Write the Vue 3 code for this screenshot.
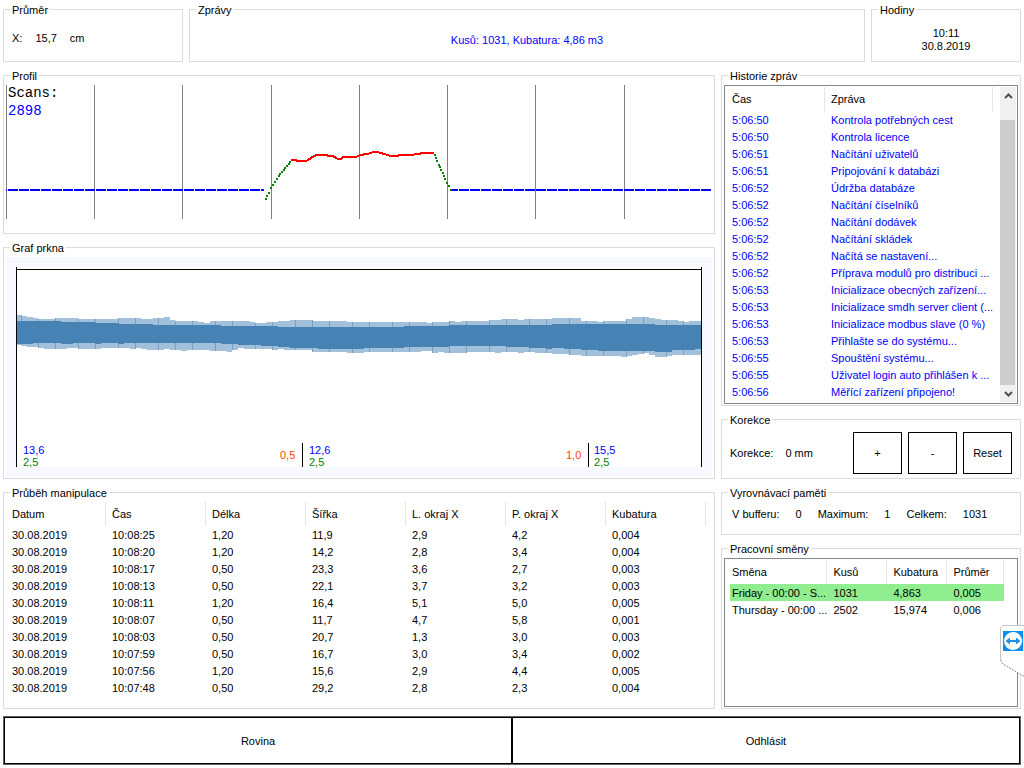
<script setup>
const gridLines = [6, 94, 182, 271, 359, 447, 535, 624]

const profilePoints =
  '291,160 296,160 297,161 306,161 308,160 311,158 314,156 317,155 327,155 328,156 333,156 336,158 338,159 341,159 343,157 356,157 360,155 367,154 374,152 378,152 380,153 385,154 390,156 397,156 400,155 413,155 415,154 419,154 422,153 433,153'

const edgePoints = [
  [266, 199], [267, 196], [269, 193], [271, 188], [273, 185], [275, 182], [277, 179], [279, 176],
  [280, 174], [282, 172], [284, 170], [285, 168], [287, 166], [289, 164], [290, 162],
  [433, 153], [435, 155], [436, 158], [437, 161], [439, 165], [440, 167], [441, 170], [443, 173],
  [444, 176], [445, 179], [447, 183], [449, 186], [451, 190],
]

// Each step is [end x, y]; every band begins at x = 17.
const outerTop = [
  [22, 315], [27, 316], [33, 317], [38, 318], [55, 319], [78, 318], [118, 319], [141, 318],
  [153, 319], [164, 318], [170, 317], [175, 320], [198, 321], [204, 322], [210, 323], [250, 321],
  [255, 322], [267, 323], [278, 322], [290, 321], [313, 320], [347, 321], [427, 322], [432, 323],
  [449, 322], [455, 321], [461, 322], [489, 321], [501, 320], [518, 319], [524, 320], [552, 319],
  [581, 318], [598, 321], [603, 322], [626, 321], [632, 319], [649, 317], [655, 318], [661, 319],
  [678, 320], [684, 321], [689, 322], [701, 321],
]
const outerBottom = [
  [22, 345], [27, 346], [38, 347], [44, 348], [67, 349], [73, 348], [78, 348], [101, 349],
  [130, 348], [136, 349], [141, 348], [147, 349], [164, 350], [170, 349], [181, 350], [187, 351],
  [210, 350], [227, 351], [232, 352], [238, 350], [244, 348], [272, 349], [278, 350], [284, 349],
  [312, 350], [347, 352], [364, 353], [421, 352], [432, 351], [438, 353], [444, 352], [467, 353],
  [495, 352], [501, 353], [518, 352], [524, 353], [535, 352], [552, 353], [569, 354], [581, 355],
  [621, 356], [627, 357], [632, 356], [638, 355], [644, 354], [649, 353], [655, 355], [667, 357],
  [672, 356], [701, 355],
]
const coreTop = [
  [61, 321], [95, 322], [119, 323], [153, 324], [221, 325], [278, 326], [404, 327], [449, 326],
  [552, 325], [655, 324], [701, 325],
]
const coreBottom = [
  [33, 344], [61, 343], [73, 344], [95, 343], [101, 344], [118, 343], [124, 344], [221, 343],
  [238, 344], [261, 345], [278, 346], [290, 347], [318, 348], [364, 349], [404, 348], [449, 347],
  [506, 346], [529, 347], [546, 348], [552, 349], [564, 348], [581, 349], [598, 350], [655, 351],
  [672, 352], [695, 350], [701, 349],
]

function stepPoints(steps) {
  let x = 17
  const points = []
  for (const [end, y] of steps) {
    points.push([x, y], [end, y])
    x = end
  }
  return points
}
function band(top, bottom) {
  return 'M' + [...stepPoints(top), ...stepPoints(bottom).reverse()].map((p) => p.join(' ')).join('L') + 'Z'
}
const outerPath = band(outerTop, outerBottom)
const corePath = band(coreTop, coreBottom)

const sections = [
  21, 38, 55, 78, 95, 118, 135, 158, 175, 192, 215, 232, 255, 272, 295, 312, 329, 352, 369, 392,
  409, 432, 449, 466, 489, 506, 529, 546, 569, 586, 603, 626, 643, 666, 683,
]

const boards = [
  { x: 23, width: '13,6', height: '2,5' },
  { x: 309, width: '12,6', height: '2,5' },
  { x: 594, width: '15,5', height: '2,5' },
]
const cuts = [
  { x: 302, textX: 280, label: '0,5' },
  { x: 588, textX: 566, label: '1,0' },
]

const runColumns = ['Datum', 'Čas', 'Délka', 'Šířka', 'L. okraj X', 'P. okraj X', 'Kubatura']
const runs = [
  ['30.08.2019', '10:08:25', '1,20', '11,9', '2,9', '4,2', '0,004'],
  ['30.08.2019', '10:08:20', '1,20', '14,2', '2,8', '3,4', '0,004'],
  ['30.08.2019', '10:08:17', '0,50', '23,3', '3,6', '2,7', '0,003'],
  ['30.08.2019', '10:08:13', '0,50', '22,1', '3,7', '3,2', '0,003'],
  ['30.08.2019', '10:08:11', '1,20', '16,4', '5,1', '5,0', '0,005'],
  ['30.08.2019', '10:08:07', '0,50', '11,7', '4,7', '5,8', '0,001'],
  ['30.08.2019', '10:08:03', '0,50', '20,7', '1,3', '3,0', '0,003'],
  ['30.08.2019', '10:07:59', '0,50', '16,7', '3,0', '3,4', '0,002'],
  ['30.08.2019', '10:07:56', '1,20', '15,6', '2,9', '4,4', '0,005'],
  ['30.08.2019', '10:07:48', '0,50', '29,2', '2,8', '2,3', '0,004'],
]

const messages = [
  ['5:06:50', 'Kontrola potřebných cest'],
  ['5:06:50', 'Kontrola licence'],
  ['5:06:51', 'Načítání uživatelů'],
  ['5:06:51', 'Pripojování k databázi'],
  ['5:06:52', 'Údržba databáze'],
  ['5:06:52', 'Načítání číselníků'],
  ['5:06:52', 'Načítání dodávek'],
  ['5:06:52', 'Načítání skládek'],
  ['5:06:52', 'Načítá se nastavení...'],
  ['5:06:52', 'Příprava modulů pro distribuci ...'],
  ['5:06:53', 'Inicializace obecných zařízení...'],
  ['5:06:53', 'Inicializace smdh server client (...'],
  ['5:06:53', 'Inicializace modbus slave (0 %)'],
  ['5:06:53', 'Přihlašte se do systému...'],
  ['5:06:55', 'Spouštění systému...'],
  ['5:06:55', 'Uživatel login auto přihlášen k ...'],
  ['5:06:56', 'Měřící zařízení připojeno!'],
]

const shifts = [
  ['Friday - 00:00 - S...', '1031', '4,863', '0,005'],
  ['Thursday - 00:00 ...', '2502', '15,974', '0,006'],
]
</script>

<template>
  <div class="page">
    <header class="top">
      <fieldset class="group">
        <legend>Průměr</legend>
        <div class="diameter"><span>X:</span><span>15,7</span><span>cm</span></div>
      </fieldset>
      <fieldset class="group">
        <legend>Zprávy</legend>
        <div class="centered message">Kusů: 1031, Kubatura: 4,86 m3</div>
      </fieldset>
      <fieldset class="group">
        <legend>Hodiny</legend>
        <div class="centered"><span>10:11</span><span>30.8.2019</span></div>
      </fieldset>
    </header>

    <main class="main">
      <div class="column">
        <fieldset class="group">
          <legend>Profil</legend>
          <svg class="chart" viewBox="4 82 710 151" shape-rendering="crispEdges">
            <rect v-for="x in gridLines" :key="x" :x="x" y="85" width="1" height="134" fill="#808080" />
            <text class="mono" x="8" y="97">Scans:</text>
            <text class="mono" x="8" y="115" fill="#0000ff">2898</text>
            <path d="M6 190H264" stroke="#0000ff" stroke-width="2" stroke-dasharray="10 1" stroke-dashoffset="9" />
            <path d="M452 190H712" stroke="#0000ff" stroke-width="2" stroke-dasharray="10 1" stroke-dashoffset="4" />
            <rect v-for="(p, i) in edgePoints" :key="i" :x="p[0] - 1" :y="p[1] - 1" width="2" height="2" fill="#008000" />
            <polyline :points="profilePoints" fill="none" stroke="#ff0000" stroke-width="2" />
          </svg>
        </fieldset>

        <fieldset class="group">
          <legend>Graf prkna</legend>
          <svg class="chart" viewBox="4 254 710 224" shape-rendering="crispEdges">
            <defs>
              <clipPath id="board-outline"><path :d="outerPath" /></clipPath>
            </defs>
            <rect x="6" y="257" width="706" height="220" fill="#f8f8ff" />
            <rect x="16" y="267" width="686" height="200" fill="#ffffff" />
            <path :d="outerPath" fill="#a2c0d9" />
            <g clip-path="url(#board-outline)">
              <rect v-for="x in sections" :key="x" :x="x" y="310" width="1" height="50" fill="#74a1c6" />
            </g>
            <path :d="corePath" fill="#4682b4" />
            <path d="M16 267h1v2h684v-2h1v200h-1V270H17v197h-1z" fill="#000000" />
            <g v-for="c in cuts" :key="c.x">
              <rect :x="c.x" y="443" width="1" height="24" />
              <text :x="c.textX" y="459" fill="#ff4500">{{ c.label }}</text>
            </g>
            <g v-for="b in boards" :key="b.x">
              <text :x="b.x" y="454" fill="#0000ff">{{ b.width }}</text>
              <text :x="b.x" y="466" fill="#008000">{{ b.height }}</text>
            </g>
          </svg>
        </fieldset>

        <fieldset class="group grow">
          <legend>Průběh manipulace</legend>
          <table class="runs">
            <thead>
              <tr><th v-for="c in runColumns" :key="c" scope="col">{{ c }}</th></tr>
            </thead>
            <tbody>
              <tr v-for="(r, i) in runs" :key="i"><td v-for="(v, j) in r" :key="j">{{ v }}</td></tr>
            </tbody>
          </table>
        </fieldset>
      </div>

      <div class="column">
        <fieldset class="group">
          <legend>Historie zpráv</legend>
          <div class="frame">
            <table class="history">
              <colgroup><col class="wide" /><col /></colgroup>
              <thead>
                <tr><th scope="col">Čas</th><th scope="col">Zpráva</th></tr>
              </thead>
              <tbody>
                <tr v-for="(m, i) in messages" :key="i"><td>{{ m[0] }}</td><td>{{ m[1] }}</td></tr>
              </tbody>
            </table>
            <div class="scrollbar">
              <button type="button" aria-label="Nahoru">
                <svg width="9" height="6" viewBox="0 0 9 6"><path d="M1 5L4.500 1.500L8 5" /></svg>
              </button>
              <div class="thumb"></div>
              <button type="button" aria-label="Dolů">
                <svg width="9" height="6" viewBox="0 0 9 6"><path d="M1 1L4.500 4.500L8 1" /></svg>
              </button>
            </div>
          </div>
        </fieldset>

        <fieldset class="group">
          <legend>Korekce</legend>
          <div class="correction">
            <span>Korekce:</span>
            <span class="value">0 mm</span>
            <button type="button">+</button>
            <button type="button">-</button>
            <button type="button">Reset</button>
          </div>
        </fieldset>

        <fieldset class="group">
          <legend>Vyrovnávací paměti</legend>
          <div class="buffers">
            <span>V bufferu:</span><span>0</span>
            <span>Maximum:</span><span>1</span>
            <span>Celkem:</span><span>1031</span>
          </div>
        </fieldset>

        <fieldset class="group grow">
          <legend>Pracovní směny</legend>
          <div class="frame">
            <table class="shifts">
              <colgroup><col class="wide" /><col class="narrow" /><col class="narrow" /><col /></colgroup>
              <thead>
                <tr>
                  <th scope="col">Směna</th><th scope="col">Kusů</th><th scope="col">Kubatura</th><th scope="col">Průměr</th>
                </tr>
              </thead>
              <tbody>
                <tr v-for="(s, i) in shifts" :key="i" :class="{ active: i === 0 }">
                  <td v-for="(v, j) in s" :key="j">{{ v }}</td>
                </tr>
              </tbody>
            </table>
          </div>
        </fieldset>
      </div>
    </main>

    <footer class="actions">
      <button type="button">Rovina</button>
      <button type="button">Odhlásit</button>
    </footer>

    <button class="remote" type="button" aria-label="TeamViewer">
      <svg width="25" height="54" viewBox="0 0 25 54">
        <path d="M26 1H4L1 4V36L4 40L26 53.500Z" fill="#ffffff" />
        <path d="M26 1.500H4L1.500 4V36" fill="none" stroke="#c4c6cc" />
        <path d="M1.500 36L4 40L26 53" fill="none" stroke="#8a8c92" stroke-dasharray="2 1" />
        <rect x="4" y="7" width="20" height="20" fill="#0e8ff0" />
        <circle cx="14" cy="17" r="9" fill="#ffffff" />
        <path d="M6.500 17L11 13.500V16H17V13.500L21.500 17L17 20.500V18H11V20.500Z" fill="#1f8ee6" />
      </svg>
    </button>
  </div>
</template>

<style>
body {
  margin: 0;
  background: #ffffff;
}
</style>

<style scoped>
.page {
  position: relative;
  display: flex;
  flex-direction: column;
  gap: 7px;
  box-sizing: border-box;
  min-height: 100vh;
  padding: 3px;
  overflow: hidden;
  color: #000000;
  font: 11px/13px "Liberation Sans", Arial, sans-serif;
}
button {
  box-sizing: border-box;
  margin: 0;
  padding: 0;
  border: 1px solid #000000;
  border-radius: 0;
  background: #ffffff;
  color: inherit;
  font: inherit;
}
.top {
  display: grid;
  grid-template-columns: 180px minmax(0, 1fr) 150px;
  gap: 6px;
  min-height: 59px;
}
.main {
  flex: 1;
  display: grid;
  grid-template-columns: minmax(0, 1fr) 300px;
  gap: 6px;
}
.column {
  display: flex;
  flex-direction: column;
  gap: 7px;
  min-width: 0;
}
.group {
  display: flex;
  flex-direction: column;
  box-sizing: border-box;
  min-width: 0;
  margin: 0;
  padding: 0;
  border: 1px solid #dcdcdc;
}
.grow {
  flex: 1;
}
legend {
  margin-left: 6px;
  padding: 1px 2px 0;
  line-height: 12px;
}
.diameter {
  flex: 1;
  display: flex;
  align-items: center;
  gap: 13px;
  padding: 0 8px;
}
.centered {
  flex: 1;
  display: flex;
  flex-direction: column;
  align-items: center;
  justify-content: center;
  padding-top: 2px;
}
.message {
  padding-top: 4px;
  color: #0000ff;
}
.chart {
  display: block;
  width: 100%;
  height: auto;
}
.mono {
  font: 14px "Liberation Mono", "Courier New", monospace;
}
table {
  table-layout: fixed;
  border-collapse: separate;
  border-spacing: 0;
}
th,
td {
  box-sizing: border-box;
  padding: 0 0 0 6px;
  font-weight: normal;
  text-align: left;
  white-space: nowrap;
}
th {
  height: 24px;
  border-right: 1px solid #e5e5e5;
}
td {
  height: 17px;
  padding-top: 2px;
}
.wide {
  width: 100px;
}
.narrow {
  width: 60px;
}
.runs {
  width: calc(100% - 10px);
  margin: 3px 8px 12px 2px;
}
.frame {
  flex: 1;
  display: flex;
  align-items: flex-start;
  margin: 3px 2px 1px;
  padding: 1px;
  border: 1px solid #828790;
}
.history {
  flex: 1;
  margin: 0 7px 2px 0;
}
.history td {
  color: #0000ff;
}
.scrollbar {
  align-self: stretch;
  display: flex;
  flex-direction: column;
  width: 16px;
  background: #f0f0f0;
}
.scrollbar button {
  display: flex;
  align-items: center;
  justify-content: center;
  height: 17px;
  border: 0;
  background: #f0f0f0;
}
.scrollbar path {
  fill: none;
  stroke: #505050;
  stroke-width: 2;
}
.thumb {
  flex: 1;
  margin: 16px 1px 0 0;
  background: #cdcdcd;
}
.correction {
  display: flex;
  align-items: center;
  gap: 6px;
  padding: 6px 8px 4px;
}
.correction .value {
  flex: 1;
  padding-left: 6px;
}
.correction button {
  width: 49px;
  height: 42px;
}
.buffers {
  display: flex;
  gap: 16px;
  padding: 9px 10px 13px;
}
.shifts {
  flex: 1;
  margin-right: 12px;
}
.shifts td:first-child {
  padding-left: 2px;
  border-left: 4px solid transparent;
  background-clip: padding-box;
}
.active td {
  background-color: #90ee90;
}
.actions {
  display: flex;
  border: 1px solid #606060;
}
.actions button {
  flex: 1;
  height: 47px;
  padding-top: 2px;
}
.remote {
  position: absolute;
  right: 0;
  bottom: 90px;
  border: 0;
  background: none;
}
.remote svg {
  display: block;
}
</style>
